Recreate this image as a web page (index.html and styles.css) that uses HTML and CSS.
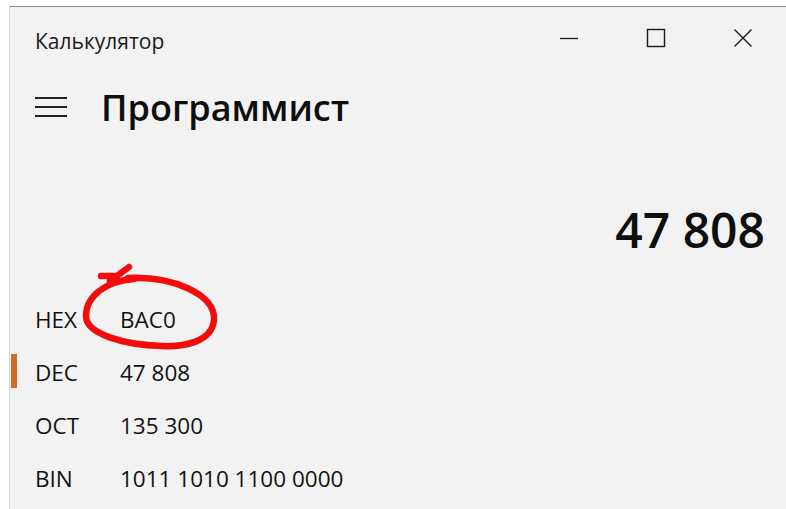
FILE: index.html
```html
<!DOCTYPE html>
<html lang="ru">
<head>
<meta charset="utf-8">
<title>Калькулятор</title>
<link rel="stylesheet" href="styles.css">
</head>
<body>
<div class="window">
  <header class="titlebar">
    <span class="app-title">Калькулятор</span>
    <div class="caption-buttons">
      <button class="cap-btn" aria-label="Свернуть">
        <svg width="20" height="20" viewBox="0 0 20 20"><path d="M1 10.5h18" stroke="#1a1a1a" stroke-width="1.3" fill="none"/></svg>
      </button>
      <button class="cap-btn" aria-label="Развернуть">
        <svg width="20" height="20" viewBox="0 0 20 20"><rect x="1.5" y="1.5" width="17" height="17" stroke="#1a1a1a" stroke-width="1.4" fill="none"/></svg>
      </button>
      <button class="cap-btn" aria-label="Закрыть">
        <svg width="20" height="20" viewBox="0 0 20 20"><path d="M1.5 1.5l17 17M18.5 1.5l-17 17" stroke="#1a1a1a" stroke-width="1.4" fill="none"/></svg>
      </button>
    </div>
  </header>

  <div class="mode-bar">
    <span class="hamburger"><i></i><i></i><i></i></span>
    <h1 class="mode-title">Программист</h1>
  </div>

  <div class="display">47 808</div>

  <ul class="radix-list">
    <li class="radix-row">
      <span class="radix-name">HEX</span><span class="radix-value">BAC0</span>
      <svg class="scribble" width="150" height="100" viewBox="80 260 150 100">
        <path d="M128 278 C 172 276, 216 294, 214 320 C 212 342, 184 347, 162 346 C 124 345, 86 334, 86 316 C 86 296, 106 281, 134 279 M101 276 L117 276 M110 281 L129 267" stroke="#f20c0c" stroke-width="6.5" fill="none" stroke-linecap="round"/>
      </svg>
    </li>
    <li class="radix-row active"><span class="radix-name">DEC</span><span class="radix-value">47 808</span></li>
    <li class="radix-row"><span class="radix-name">OCT</span><span class="radix-value">135 300</span></li>
    <li class="radix-row"><span class="radix-name">BIN</span><span class="radix-value">1011 1010 1100 0000</span></li>
  </ul>
</div>
</body>
</html>
```

FILE: styles.css
```css
html, body {
  margin: 0;
  padding: 0;
  background: #ffffff;
  height: 100%;
  overflow: hidden;
}

body {
  padding-top: 6px;
  padding-left: 9px;
  font-family: "Open Sans", "Noto Sans", sans-serif;
  color: #111;
}

.window {
  background: #f2f2f2;
  border-top: 1px solid #8a8a8a;
  border-left: 1px solid #d6d6d6;
  height: 520px;
  position: relative;
}

.titlebar {
  display: flex;
  align-items: flex-start;
  height: 62px;
}

.app-title {
  padding: 20px 0 0 25px;
  font-size: 21px;
  color: #1b1b1b;
  flex: 1;
}

.caption-buttons {
  display: flex;
  padding-top: 11px;
}

.cap-btn {
  width: 87px;
  height: 40px;
  border: 0;
  background: transparent;
  display: flex;
  align-items: center;
  justify-content: center;
  padding: 0;
}

.mode-bar {
  display: flex;
  align-items: flex-start;
  height: 60px;
}

.hamburger {
  display: flex;
  flex-direction: column;
  gap: 7px;
  width: 32px;
  margin: 28px 34px 0 25px;
}

.hamburger i {
  display: block;
  height: 2px;
  background: #222;
}

.mode-title {
  margin: 14px 0 0;
  font-size: 36px;
  font-weight: 600;
  color: #0f0f0f;
  letter-spacing: 0;
}

.display {
  text-align: right;
  font-size: 48px;
  font-weight: 600;
  color: #0f0f0f;
  padding-right: 21px;
  margin-top: 68px;
  line-height: 66px;
}

.radix-list {
  list-style: none;
  margin: 30px 0 0;
  padding: 0;
}

.radix-row {
  display: flex;
  align-items: center;
  height: 53px;
  font-size: 22.5px;
  color: #121212;
  position: relative;
}

.radix-row.active::before {
  content: "";
  position: absolute;
  left: 1px;
  top: 8px;
  width: 6px;
  height: 34px;
  background: #d06a24;
}

.radix-name {
  width: 85px;
  padding-left: 25px;
  box-sizing: content-box;
}

.scribble {
  position: absolute;
  left: 70px;
  top: -33px;
  pointer-events: none;
}
```
